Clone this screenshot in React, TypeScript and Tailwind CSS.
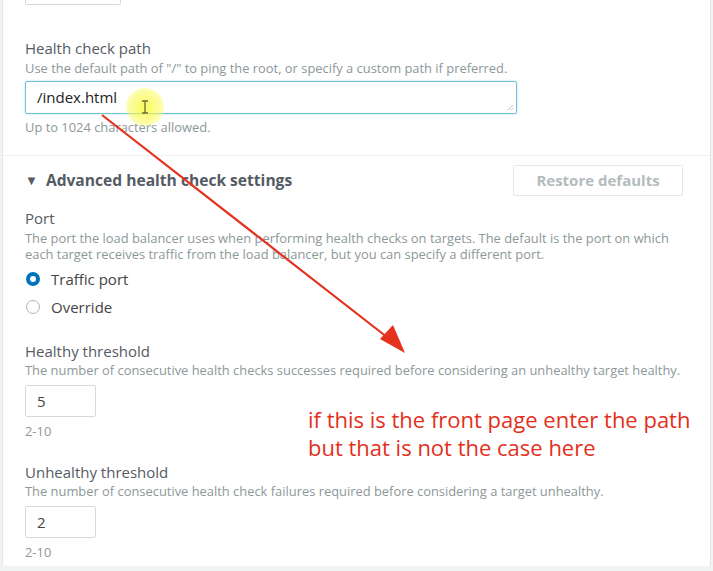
import React from 'react'

const font = { fontFamily: '"Open Sans", Roboto, "Liberation Sans", sans-serif' }

function Label({ children }: { children: React.ReactNode }) {
  return <div className="text-[15px] leading-[20px] text-[#545b64]">{children}</div>
}

function Hint({ children, className = '' }: { children: React.ReactNode; className?: string }) {
  return <div className={`text-[12.9px] leading-[16px] text-[#8d9899] ${className}`}>{children}</div>
}

function SmallInput({ value }: { value: string }) {
  return (
    <div className="w-[71px] h-[32px] border border-[#d5dbdb] rounded-[2px] flex items-center pl-[11px] text-[15px] text-[#444]">
      {value}
    </div>
  )
}

function Radio({ checked, label }: { checked?: boolean; label: string }) {
  return (
    <div className="flex items-center h-[20px] gap-[11px]">
      <span
        className={
          checked
            ? 'w-[14px] h-[14px] rounded-full border-[4px] border-[#0073bb] bg-white ml-[1px]'
            : 'w-[14px] h-[14px] rounded-full border border-[#aab7b8] bg-white ml-[1px]'
        }
      />
      <span className="text-[15px] text-[#444]">{label}</span>
    </div>
  )
}

export default function App() {
  return (
    <div className="relative w-[713px] h-[571px] bg-[#f2f3f3] overflow-hidden" style={font}>
      <div className="ml-[2px] w-[709px] h-[566px] bg-white border-x border-[#e4e7e7]">
        <div className="pl-[22px]">
          <div className="w-[96px] h-[5px] border-x border-b border-[#d5dbdb] rounded-b-[2px]" />
          <div className="mt-[33px]">
            <Label>Health check path</Label>
          </div>
          <Hint className="mt-[2px]">Use the default path of "/" to ping the root, or specify a custom path if preferred.</Hint>
          <div className="relative mt-[5px] w-[492px] h-[33px] border border-[#74c2da] rounded-[2px] shadow-[0_0_2px_#9fd6e6] flex items-center pl-[11px] text-[15px] text-[#222]">
            /index.html
            <svg className="absolute right-[2px] bottom-[2px]" width="7" height="7" viewBox="0 0 7 7">
              <path d="M6 1 L1 6 M6 4 L4 6" stroke="#b8c0c1" strokeWidth="0.9" />
            </svg>
          </div>
          <Hint className="mt-[5px]">Up to 1024 characters allowed.</Hint>
        </div>

        <div className="mt-[20px] border-t border-[#eef0f0]" />

        <div className="pl-[22px] pr-[27px]">
          <div className="mt-[9px] h-[31px] flex items-center justify-between">
            <div className="flex items-center gap-[8px] text-[#545b64]">
              <span className="text-[13px] leading-none">▼</span>
              <span className="text-[15.6px] font-bold">Advanced health check settings</span>
            </div>
            <div className="w-[170px] h-[31px] border border-[#e4e8e8] rounded-[2px] flex items-center justify-center text-[15px] font-bold text-[#b3bcbd]">
              Restore defaults
            </div>
          </div>

          <div className="mt-[12px]">
            <Label>Port</Label>
          </div>
          <Hint className="mt-[2px]">
            The port the load balancer uses when performing health checks on targets. The default is the port on which
            <br />
            each target receives traffic from the load balancer, but you can specify a different port.
          </Hint>
          <div className="mt-[7px] flex flex-col gap-[8px]">
            <Radio checked label="Traffic port" />
            <Radio label="Override" />
          </div>

          <div className="mt-[24px]">
            <Label>Healthy threshold</Label>
          </div>
          <Hint className="mt-[1px]">The number of consecutive health checks successes required before considering an unhealthy target healthy.</Hint>
          <div className="mt-[7px]">
            <SmallInput value="5" />
          </div>
          <Hint className="mt-[6px]">2-10</Hint>

          <div className="mt-[23px]">
            <Label>Unhealthy threshold</Label>
          </div>
          <Hint className="mt-[1px]">The number of consecutive health check failures required before considering a target unhealthy.</Hint>
          <div className="mt-[7px]">
            <SmallInput value="2" />
          </div>
          <Hint className="mt-[6px]">2-10</Hint>
        </div>
      </div>

      {/* cursor highlight */}
      <div className="absolute left-[126px] top-[88px] w-[38px] h-[38px] rounded-full bg-[radial-gradient(circle,rgba(250,250,60,0.85)_0%,rgba(250,250,80,0.55)_55%,rgba(255,255,120,0)_100%)]" />
      <svg className="absolute left-[140px] top-[100px]" width="10" height="14" viewBox="0 0 10 14">
        <path d="M2 1 H8 M5 1 V13 M2 13 H8" stroke="#6b6b3a" strokeWidth="1.3" fill="none" />
      </svg>

      {/* annotation arrow */}
      <svg className="absolute left-0 top-0 pointer-events-none" width="713" height="571" viewBox="0 0 713 571">
        <line x1="102" y1="115" x2="392" y2="341" stroke="#e4321f" strokeWidth="2.2" />
        <polygon points="405,353 380,339 393,325" fill="#e4321f" />
      </svg>

      <div className="absolute left-[308px] top-[405px] text-[22px] leading-[28px] text-[#e3301c]">
        <div>if this is the front page enter the path</div>
        <div>but that is not the case here</div>
      </div>
    </div>
  )
}
